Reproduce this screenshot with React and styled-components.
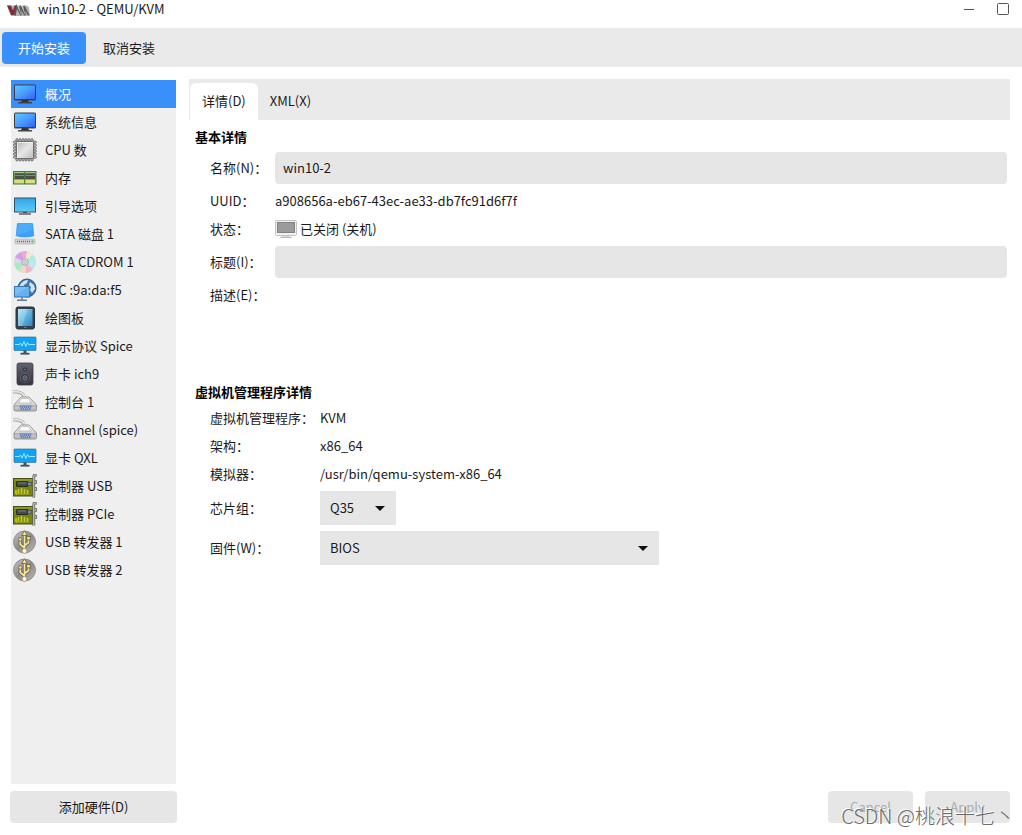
import React, { useState } from 'react';
import styled, { createGlobalStyle } from 'styled-components';

const GlobalStyle = createGlobalStyle`
  body {
    margin: 0;
    background: #fff;
  }

  body, button, input, select, textarea {
    font-family: "Noto Sans CJK SC", "Noto Sans", sans-serif;
    font-size: 13px;
    line-height: 20px;
    color: #1a1a1a;
  }
`;

const Window = styled.div`
  position: relative;
  display: flex;
  flex-direction: column;
  min-height: 100vh;
`;

const TitleBar = styled.header`
  display: flex;
  align-items: flex-start;
  height: 28px;
  padding: 0 12px 0 6px;
  box-sizing: border-box;
`;

const Title = styled.h1`
  flex: 1;
  margin: 0 0 0 8px;
  font-size: 13px;
  line-height: 18px;
  font-weight: 400;
`;

const WindowButton = styled.button`
  display: flex;
  margin-left: 20px;
  padding: 2px 0;
  border: none;
  background: none;
`;

const Toolbar = styled.div`
  display: flex;
  gap: 1px;
  padding: 4px 2px 3px;
  background: #eaeaea;
`;

const ToolButton = styled.button`
  height: 32px;
  padding: 0 16px;
  border: none;
  border-radius: 4px;
  background: ${(props) => (props.$primary ? '#3990fb' : 'transparent')};
  color: ${(props) => (props.$primary ? '#fff' : '#1a1a1a')};
`;

const Body = styled.div`
  flex: 1;
  display: flex;
  gap: 12px;
  padding: 12px 12px 12px 10px;
`;

const Sidebar = styled.nav`
  display: flex;
  flex-direction: column;
  flex: 0 0 167px;
  gap: 7px;
`;

const HardwareList = styled.ul`
  flex: 1;
  margin: 1px 1px 0;
  padding: 0;
  list-style: none;
  background: #efefef;
`;

const HardwareItem = styled.button`
  display: flex;
  align-items: center;
  gap: 8px;
  width: 100%;
  height: 28px;
  padding: 0 2px;
  border: none;
  text-align: left;
  background: ${(props) => (props.$active ? '#3990fb' : 'transparent')};
  color: ${(props) => (props.$active ? '#fff' : '#1a1a1a')};
`;

const Button = styled.button`
  height: 32px;
  min-width: 85px;
  border: none;
  border-radius: 4px;
  background: #e6e6e6;

  &:disabled {
    color: #a9adb0;
  }
`;

const Main = styled.main`
  flex: 1;
  display: flex;
  flex-direction: column;
  min-width: 0;
`;

const Tabs = styled.div`
  display: flex;
  padding: 4px 1px 0;
  background: #eaeaea;
`;

const Tab = styled.button`
  height: 37px;
  padding: 0 12px 2px;
  border: none;
  border-radius: 6px 6px 0 0;
  background: ${(props) => (props.$active ? '#fff' : 'transparent')};
`;

const Panel = styled.div`
  flex: 1;
  padding: 7px 3px 7px 6px;
`;

const SectionTitle = styled.h2`
  margin: 0 0 5px;
  font-size: 13px;
  font-weight: 700;
  color: #000;
`;

const Fields = styled.div`
  display: grid;
  grid-template-columns: ${(props) => props.$labelWidth} 1fr;
  grid-auto-rows: minmax(${(props) => props.$rowHeight}, auto);
  align-items: center;
  row-gap: ${(props) => props.$gap};
  margin-bottom: 7px;
  padding-left: 15px;
`;

const Label = styled.label`
  align-self: ${(props) => (props.$top ? 'start' : 'center')};
  white-space: nowrap;
`;

const Input = styled.input`
  width: 100%;
  height: 32px;
  padding: 0 8px 2px;
  box-sizing: border-box;
  border: none;
  border-radius: 4px;
  background: #e6e6e6;
`;

const TextArea = styled.textarea`
  width: 100%;
  height: 90px;
  padding: 0;
  border: none;
  resize: none;
  background: transparent;
`;

const Status = styled.span`
  display: flex;
  align-items: center;
  gap: 3px;
`;

const SelectBox = styled.div`
  display: grid;
  align-items: center;
  width: ${(props) => props.$width};

  select, svg {
    grid-area: 1 / 1;
  }

  select {
    appearance: none;
    width: 100%;
    height: 34px;
    padding: 0 10px;
    border: none;
    border-radius: 0;
    background: #e6e6e6;
  }

  svg {
    justify-self: end;
    margin-right: 11px;
    pointer-events: none;
  }
`;

const Actions = styled.div`
  display: flex;
  justify-content: flex-end;
  gap: 12px;
`;

const Watermark = styled.div`
  position: absolute;
  right: 7px;
  bottom: 5px;
  font-size: 20px;
  line-height: 28px;
  font-weight: 300;
  color: #6c6c6c;
  text-shadow: -1px -1px 0 #fff;
  pointer-events: none;
`;

const Icon = ({ children }) => (
  <svg width="24" height="24" viewBox="0 0 24 24" aria-hidden="true">{children}</svg>
);

const Gradients = () => (
  <svg width="0" height="0" style={{ position: 'absolute' }} aria-hidden="true">
    <defs>
      <linearGradient id="screen" x1="0" y1="0" x2="1" y2="1">
        <stop offset="0" stopColor="#5cc8ff" />
        <stop offset="0.5" stopColor="#4a9cff" />
        <stop offset="1" stopColor="#2f62f0" />
      </linearGradient>
      <linearGradient id="sky" x1="0" y1="0" x2="0" y2="1">
        <stop offset="0" stopColor="#33a5e8" />
        <stop offset="1" stopColor="#5fc8fa" />
      </linearGradient>
      <linearGradient id="metal" x1="0" y1="0" x2="1" y2="1">
        <stop offset="0" stopColor="#b5b5b5" />
        <stop offset="0.5" stopColor="#e6e6e6" />
        <stop offset="1" stopColor="#bdbdbd" />
      </linearGradient>
      <linearGradient id="coin" x1="0" y1="0" x2="1" y2="1">
        <stop offset="0" stopColor="#c4c4c4" />
        <stop offset="0.5" stopColor="#8c8c8c" />
        <stop offset="1" stopColor="#b8b8b8" />
      </linearGradient>
      <linearGradient id="shell" x1="0" y1="0" x2="0" y2="1">
        <stop offset="0" stopColor="#fafafa" />
        <stop offset="1" stopColor="#b4b4b4" />
      </linearGradient>
      <linearGradient id="speaker" x1="0" y1="0" x2="0" y2="1">
        <stop offset="0" stopColor="#626370" />
        <stop offset="1" stopColor="#34353e" />
      </linearGradient>
      <linearGradient id="glass" x1="0" y1="0" x2="1" y2="1">
        <stop offset="0" stopColor="#b5e0f4" />
        <stop offset="0.5" stopColor="#62b2dd" />
        <stop offset="1" stopColor="#2b86bd" />
      </linearGradient>
    </defs>
  </svg>
);

const MonitorIcon = () => (
  <Icon>
    <path d="M9 18h6l1 2H8z" fill="#333" />
    <rect x="5" y="20" width="14" height="1.5" rx="0.5" fill="#444" />
    <rect x="1" y="2.5" width="22" height="16" rx="1.5" fill="#3d3f45" />
    <rect x="2" y="3.5" width="20" height="13.5" fill="url(#screen)" />
  </Icon>
);

const pins = [4, 7, 10, 13, 16, 19];

const CpuIcon = () => (
  <Icon>
    {pins.map((p) => (
      <g key={p} fill="#d5d5d5" stroke="#5c5c5c" strokeWidth="0.9">
        <rect x={p - 1} y="0.6" width="2" height="22.4" rx="1" />
        <rect x="0.4" y={p - 0.8} width="23" height="2" rx="1" />
      </g>
    ))}
    <rect x="3.5" y="3.5" width="17" height="17" rx="1" fill="url(#metal)" stroke="#6e6e6e" />
    <path d="M4.500 19.500v-15h15" fill="none" stroke="#f4f4f4" strokeWidth="0.8" />
  </Icon>
);

const MemoryIcon = () => (
  <Icon>
    <rect x="0.5" y="5.5" width="22.5" height="12.5" fill="#5d9c4c" stroke="#477a3e" />
    <path d="M1 6.5h21.5" stroke="#9cc58c" />
    <rect x="2" y="7.500" width="9" height="5.500" fill="#4a4f4a" />
    <rect x="12.500" y="7.500" width="9.500" height="5.500" fill="#4a4f4a" />
    <path d="M2 9.500h9M12.500 9.500h9.500" stroke="#858c85" />
    <path d="M1.500 15.500h20.500" stroke="#c8cf6a" strokeWidth="3.500" />
    <path d="M1.500 15.500h20.500" stroke="#efe98d" strokeWidth="3.500" strokeDasharray="1 1" />
    <path d="M11.700 6v12" stroke="#2f742b" />
  </Icon>
);

const BootIcon = () => (
  <Icon>
    <path d="M10 17h4v2h-4z" fill="#444" />
    <path d="M6 20h12" stroke="#555" strokeWidth="1.4" />
    <rect x="1" y="3.5" width="22" height="15" rx="0.5" fill="#37536a" />
    <rect x="2" y="4.5" width="20" height="13" fill="url(#sky)" />
  </Icon>
);

const DiskIcon = () => (
  <Icon>
    <path d="M4.500 6h15L22 18H2z" fill="#d9d9d9" />
    <path d="M5 1h14q1 0 1.100 1l1.200 13q-9.300 1.500-18.600 0L3.900 2Q4 1 5 1z" fill="#3c9ff9" />
    <path d="M5 1.500h14l.6 6L3.500 14z" fill="#69bdfc" opacity=".4" />
    <path d="M2.500 14q9.500 3 19 0l.5 4H2z" fill="#f4f4f4" />
    <rect x="2" y="17" width="20" height="5" rx="1" fill="#d4d4d4" stroke="#a6a6a6" strokeWidth="0.6" />
    <path d="M4 19.500h13" stroke="#666" strokeWidth="1.4" strokeDasharray="1 1" />
    <circle cx="19.5" cy="19.5" r="1" fill="#53b850" />
  </Icon>
);

const DiscIcon = () => (
  <Icon>
    <circle cx="12" cy="12" r="11" fill="#dedade" />
    <path d="M12 12 2 7.500A11 11 0 0 1 8 2z" fill="#d79bf0" />
    <path d="M12 12 8 2a11 11 0 0 1 6-.8z" fill="#f3a8c8" />
    <path d="M12 12 14 1.200a11 11 0 0 1 6 3.300z" fill="#efe9d8" />
    <path d="M12 12 20 4.500a11 11 0 0 1 3 7.500z" fill="#a9f0de" />
    <path d="M12 12h11a11 11 0 0 1-3 7z" fill="#bce9f3" />
    <path d="M12 12 20 19.500a11 11 0 0 1-7 3.500z" fill="#f0b5c6" />
    <path d="M12 12 13 23a11 11 0 0 1-7-2z" fill="#f2d6c6" />
    <path d="M12 12 6 21a11 11 0 0 1-5-8z" fill="#a2edc4" />
    <path d="M12 12 1 13a11 11 0 0 1 1-5.500z" fill="#ddd4f2" />
    <circle cx="12" cy="12" r="3.2" fill="#e3e0e5" stroke="#aaa6af" />
    <circle cx="12" cy="12" r="1.3" fill="#fff" stroke="#999" strokeWidth="0.7" />
  </Icon>
);

const NetworkIcon = () => (
  <Icon>
    <circle cx="14" cy="10" r="9" fill="#3c76b4" stroke="#245587" />
    <path d="M7 7q3-5 8-5l-1 3-3 2-2 4-3-1zM17 4l4 3 1 4-3 4-2-3 1-3-2-2z" fill="#d2e4f2" />
    <rect x="1.5" y="8.5" width="15" height="10.5" fill="#63b2f2" stroke="#3976ad" />
    <path d="M2 9h14L2 17z" fill="#8dcbf9" opacity=".5" />
    <path d="M9 19v3M4 22.300h10" stroke="#667b8c" strokeWidth="1.4" />
  </Icon>
);

const TabletIcon = () => (
  <Icon>
    <rect x="3" y="1" width="18.5" height="22" rx="2" fill="#35444c" stroke="#263238" />
    <rect x="5" y="3" width="14.5" height="17" fill="url(#glass)" />
    <path d="M5 3h10L9 20H5z" fill="#d3eefa" opacity=".25" />
    <circle cx="12.2" cy="21.5" r="0.8" fill="#8b969b" />
  </Icon>
);

const DisplayIcon = () => (
  <Icon>
    <path d="M10.500 16h3v4h-3z" fill="#3e535d" />
    <rect x="7.5" y="18.8" width="9" height="1.8" fill="#3e535d" />
    <rect x="1" y="3" width="22" height="13.5" rx="0.5" fill="#0da4f8" stroke="#3d718f" strokeWidth="0.7" />
    <path d="M2 10.500h4.500l1-1.500 1.500 3 2-4.500 1.800 5 1.700-4 1.500 2.500 1-.5H22" fill="none" stroke="#bfe8ff" strokeWidth="0.9" />
  </Icon>
);

const SpeakerIcon = () => (
  <Icon>
    <rect x="4" y="1" width="16" height="22" rx="2" fill="url(#speaker)" stroke="#3c3d47" strokeWidth="0.8" />
    <circle cx="12" cy="7.5" r="2.4" fill="#292a30" stroke="#5f616c" strokeWidth="0.7" />
    <circle cx="12" cy="7.5" r="1" fill="#747783" />
    <circle cx="12" cy="16" r="4.5" fill="#30313a" stroke="#70737f" strokeWidth="0.7" />
    <circle cx="12" cy="16" r="2.4" fill="#4d5a74" stroke="#7f8aa3" strokeWidth="0.6" />
  </Icon>
);

const SerialIcon = () => (
  <Icon>
    <path d="M0 2q11-.5 11.500 6" fill="none" stroke="#a2a2a2" strokeWidth="3.2" />
    <path d="M0 1.700q11-.5 11.500 6" fill="none" stroke="#e8e8e8" strokeWidth="1.6" />
    <path d="M8 7h8l7.500 8v4.500q0 1.500-1.500 1.500H2.500Q1 21 1 19.500V15z" fill="url(#shell)" stroke="#8c8c8c" strokeWidth="0.9" />
    <path d="M8.500 8.500h7l3 4.500h-13z" fill="#fafafa" stroke="#b0b0b0" strokeWidth="0.7" />
    <path d="M1.500 16h4M19 16h4" stroke="#8c8c8c" strokeWidth="0.7" />
    <path d="M6.500 15.500h12l-1.500 4.500H8z" fill="#5f81ba" stroke="#8394b2" strokeWidth="0.8" />
    <path d="M8 17h9M9 18.700h7" stroke="#c5d8f2" strokeWidth="0.9" strokeDasharray="1 1" />
  </Icon>
);

const CardIcon = () => (
  <Icon>
    <rect x="0.5" y="4.5" width="19.5" height="17.5" fill="#7a8316" stroke="#474f15" />
    <path d="M1.500 5.500h18v1h-18z" fill="#a5ae2a" />
    <rect x="3.5" y="7.5" width="11.5" height="5" rx="0.5" fill="#444b4a" stroke="#272e26" />
    <path d="M5 9h8" stroke="#79807f" />
    <path d="M15 8.500h3.500v3H15" fill="#738fa8" stroke="#3f5364" strokeWidth="0.8" />
    <path d="M3 21v-5M5.500 21v-6M8.500 21v-7M11.500 21v-6M14.500 21v-5" stroke="#c0cc20" strokeWidth="1.6" />
    <path d="M2 21h13" stroke="#4f5714" strokeDasharray="1 2" />
    <path d="M20.800 23.500V2.500q0-1.500 1.500-1.500H24" fill="none" stroke="#62645f" strokeWidth="2.8" />
    <path d="M20.800 23V2.500q0-1.500 1.500-1.500H24" fill="none" stroke="#c9cac6" strokeWidth="1.2" />
    <path d="M22 6.500h1.500v3H22M22 13.500h1.500v3H22" fill="#bbb" stroke="#70726c" />
  </Icon>
);

const UsbIcon = () => (
  <Icon>
    <circle cx="11.5" cy="12" r="11" fill="url(#coin)" stroke="#858585" strokeWidth="0.8" />
    <g fill="none" stroke="#5f553a" strokeWidth="3.2">
      <path d="M11.500 20V4M11.500 18 7.300 14.500V10M11.500 15.500l4-3V9" />
    </g>
    <g fill="none" stroke="#f7e69c" strokeWidth="1.8">
      <path d="M11.500 20V4M11.500 18 7.300 14.500V10M11.500 15.500l4-3V9" />
    </g>
    <path d="M11.500.8 14.300 5.500H8.700z" fill="#f7e69c" stroke="#5f553a" strokeWidth="0.7" />
    <circle cx="7.3" cy="9.5" r="1.7" fill="#f7e69c" stroke="#5f553a" strokeWidth="0.7" />
    <rect x="13.8" y="6.500" width="3.4" height="3.4" fill="#f7e69c" stroke="#5f553a" strokeWidth="0.7" />
    <circle cx="11.5" cy="21" r="2.4" fill="#fffbe8" stroke="#8d7b4e" strokeWidth="0.6" />
  </Icon>
);

const AppIcon = () => (
  <svg width="24" height="20" viewBox="0 0 24 20" aria-hidden="true">
    <path d="M1 5.500h20l2 2 1 8.500H5z" fill="#b4b4b4" />
    <path d="M1 5.500h4l2 5 1.500-5H11L8.500 15H5z" fill="#7d2d3c" />
    <path d="M9 15.500l1.500-9 4.500 8.500-1-9 5 9-1-9 4.500 9" fill="none" stroke="#5a5a5a" strokeWidth="1.6" />
    <path d="M12 6l3 8M16 6l3 8" stroke="#ddd" strokeWidth="0.6" />
  </svg>
);

const PowerOffIcon = () => (
  <svg width="22" height="21" viewBox="0 0 22 21" aria-hidden="true">
    <path d="M8 17h6l2 2.500H6z" fill="#d6d6d6" />
    <path d="M5 19.500h12" stroke="#bbb" />
    <rect x="0.5" y="2.5" width="21" height="15" rx="1" fill="#f1f1f1" stroke="#c2c2c2" />
    <rect x="2.5" y="4.5" width="17" height="10" fill="#9b9b9b" stroke="#828282" />
  </svg>
);

const Arrow = () => (
  <svg width="10" height="5" viewBox="0 0 10 5" aria-hidden="true">
    <path d="M0 0h10L5 5z" fill="#111" />
  </svg>
);

const hardware = [
  { name: '概况', icon: MonitorIcon },
  { name: '系统信息', icon: MonitorIcon },
  { name: 'CPU 数', icon: CpuIcon },
  { name: '内存', icon: MemoryIcon },
  { name: '引导选项', icon: BootIcon },
  { name: 'SATA 磁盘 1', icon: DiskIcon },
  { name: 'SATA CDROM 1', icon: DiscIcon },
  { name: 'NIC :9a:da:f5', icon: NetworkIcon },
  { name: '绘图板', icon: TabletIcon },
  { name: '显示协议 Spice', icon: DisplayIcon },
  { name: '声卡 ich9', icon: SpeakerIcon },
  { name: '控制台 1', icon: SerialIcon },
  { name: 'Channel (spice)', icon: SerialIcon },
  { name: '显卡 QXL', icon: DisplayIcon },
  { name: '控制器 USB', icon: CardIcon },
  { name: '控制器 PCIe', icon: CardIcon },
  { name: 'USB 转发器 1', icon: UsbIcon },
  { name: 'USB 转发器 2', icon: UsbIcon },
];

const App = () => {
  const [selected, setSelected] = useState('概况');
  const [details, setDetails] = useState({
    name: 'win10-2',
    title: '',
    description: '',
    chipset: 'Q35',
    firmware: 'BIOS',
  });

  const handleChange = (e) => {
    const { name, value } = e.target;
    setDetails({
      ...details,
      [name]: value,
    });
  };

  return (
    <Window>
      <GlobalStyle />
      <Gradients />
      <TitleBar>
        <AppIcon />
        <Title>win10-2 - QEMU/KVM</Title>
        <WindowButton aria-label="最小化">
          <svg width="14" height="14" viewBox="0 0 14 14">
            <path d="M2 7.500h10" stroke="#555" />
          </svg>
        </WindowButton>
        <WindowButton aria-label="最大化">
          <svg width="14" height="14" viewBox="0 0 14 14">
            <rect x="1.5" y="1.5" width="11" height="11" rx="1" fill="none" stroke="#555" />
          </svg>
        </WindowButton>
      </TitleBar>

      <Toolbar>
        <ToolButton $primary>开始安装</ToolButton>
        <ToolButton>取消安装</ToolButton>
      </Toolbar>

      <Body>
        <Sidebar>
          <HardwareList>
            {hardware.map(({ name, icon: ItemIcon }) => (
              <li key={name}>
                <HardwareItem $active={name === selected} onClick={() => setSelected(name)}>
                  <ItemIcon />
                  {name}
                </HardwareItem>
              </li>
            ))}
          </HardwareList>
          <Button>添加硬件(D)</Button>
        </Sidebar>

        <Main>
          <Tabs role="tablist">
            <Tab role="tab" aria-selected="true" $active>详情(D)</Tab>
            <Tab role="tab" aria-selected="false">XML(X)</Tab>
          </Tabs>
          <Panel role="tabpanel">
            <SectionTitle>基本详情</SectionTitle>
            <Fields $labelWidth="65px" $rowHeight="20px" $gap="7px">
              <Label htmlFor="name">名称(N)：</Label>
              <Input id="name" name="name" value={details.name} onChange={handleChange} />
              <span>UUID：</span>
              <span>a908656a-eb67-43ec-ae33-db7fc91d6f7f</span>
              <span>状态：</span>
              <Status>
                <PowerOffIcon />
                已关闭 (关机)
              </Status>
              <Label htmlFor="title">标题(I)：</Label>
              <Input id="title" name="title" value={details.title} onChange={handleChange} />
              <Label htmlFor="description" $top>描述(E)：</Label>
              <TextArea
                id="description"
                name="description"
                value={details.description}
                onChange={handleChange}
              />
            </Fields>

            <SectionTitle>虚拟机管理程序详情</SectionTitle>
            <Fields $labelWidth="110px" $rowHeight="22px" $gap="6px">
              <span>虚拟机管理程序：</span>
              <span>KVM</span>
              <span>架构：</span>
              <span>x86_64</span>
              <span>模拟器：</span>
              <span>/usr/bin/qemu-system-x86_64</span>
              <Label htmlFor="chipset">芯片组：</Label>
              <SelectBox $width="76px">
                <select id="chipset" name="chipset" value={details.chipset} onChange={handleChange}>
                  <option>Q35</option>
                  <option>i440FX</option>
                </select>
                <Arrow />
              </SelectBox>
              <Label htmlFor="firmware">固件(W)：</Label>
              <SelectBox $width="339px">
                <select id="firmware" name="firmware" value={details.firmware} onChange={handleChange}>
                  <option>BIOS</option>
                  <option>UEFI</option>
                </select>
                <Arrow />
              </SelectBox>
            </Fields>
          </Panel>
          <Actions>
            <Button disabled>Cancel</Button>
            <Button disabled>Apply</Button>
          </Actions>
        </Main>
      </Body>
      <Watermark>CSDN @桃浪十七丶</Watermark>
    </Window>
  );
};

export default App;
